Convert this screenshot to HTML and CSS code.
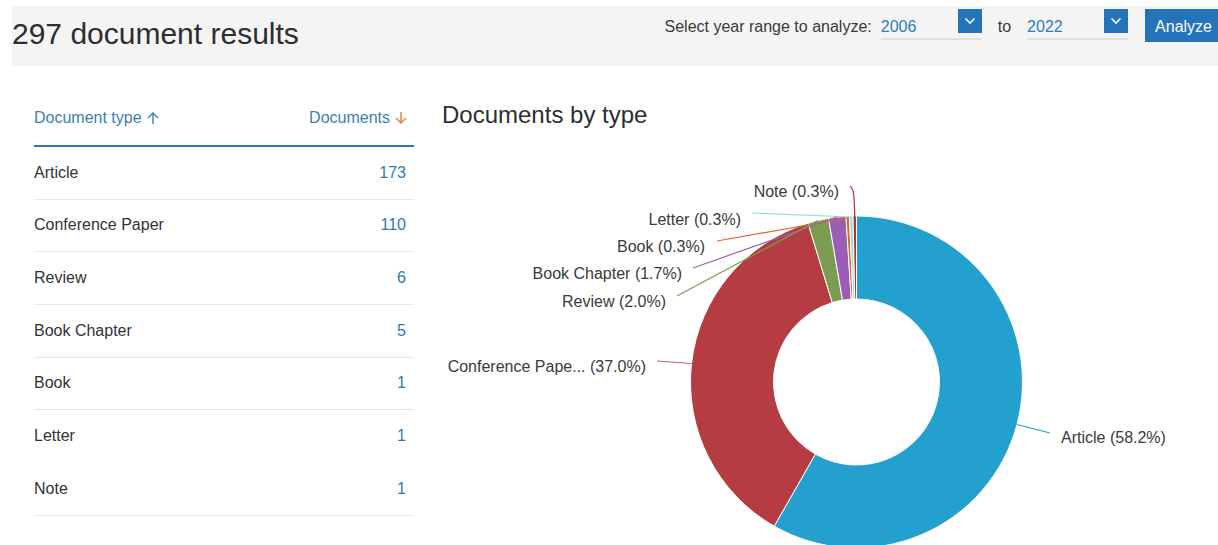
FILE: index.html
```html
<!DOCTYPE html>
<html lang="en">
<head>
<meta charset="utf-8">
<title>Document results</title>
<link rel="stylesheet" href="styles.css">
</head>
<body>
<header class="results-bar">
  <h1 class="results-title">297 document results</h1>
  <div class="range-controls">
    <span class="range-label">Select year range to analyze:</span>
    <div class="year-select">
      <span class="year-value">2006</span>
      <span class="select-toggle"><svg width="24" height="24" viewBox="0 0 24 24"><polyline points="7.5,9.5 12,14 16.5,9.5" fill="none" stroke="#fff" stroke-width="1.6"/></svg></span>
    </div>
    <span class="range-sep">to</span>
    <div class="year-select">
      <span class="year-value">2022</span>
      <span class="select-toggle"><svg width="24" height="24" viewBox="0 0 24 24"><polyline points="7.5,9.5 12,14 16.5,9.5" fill="none" stroke="#fff" stroke-width="1.6"/></svg></span>
    </div>
    <button class="analyze-btn" type="button">Analyze</button>
  </div>
</header>

<main class="analysis">
  <section class="type-table">
    <div class="table-head">
      <span class="head-cell">Document type
        <svg class="sort-icon" width="14" height="14" viewBox="0 0 14 14"><path d="M7 13V2M2 7l5-5 5 5" fill="none" stroke="#3a80b3" stroke-width="1.4"/></svg>
      </span>
      <span class="head-cell head-count">Documents
        <svg class="sort-icon" width="14" height="14" viewBox="0 0 14 14"><path d="M7 1v11M2 7l5 5 5-5" fill="none" stroke="#e8793a" stroke-width="1.4"/></svg>
      </span>
    </div>
    <div class="table-row"><span>Article</span><span class="count">173</span></div>
    <div class="table-row"><span>Conference Paper</span><span class="count">110</span></div>
    <div class="table-row"><span>Review</span><span class="count">6</span></div>
    <div class="table-row"><span>Book Chapter</span><span class="count">5</span></div>
    <div class="table-row"><span>Book</span><span class="count">1</span></div>
    <div class="table-row row-plain"><span>Letter</span><span class="count">1</span></div>
    <div class="table-row"><span>Note</span><span class="count">1</span></div>
  </section>

  <section class="type-chart">
    <h2 class="chart-title">Documents by type</h2>
    <svg class="donut" width="776" height="420" viewBox="0 0 776 420">
      <g stroke="#fff" stroke-width="1">
        <path fill="#24a0cf" d="M414.5,76 A166,166 0 1 1 332.25,386.19 L373.37,314.09 A83,83 0 1 0 414.5,159 Z"/>
        <path fill="#b53c42" d="M332.25,386.19 A166,166 0 0 1 366.04,83.22 L390.27,162.61 A83,83 0 0 0 373.37,314.09 Z"/>
        <path fill="#7b9d52" d="M366.04,83.22 A166,166 0 0 1 386.53,78.37 L400.51,160.19 A83,83 0 0 0 390.27,162.61 Z"/>
        <path fill="#9a5eb6" d="M386.53,78.37 A166,166 0 0 1 403.96,76.33 L409.23,159.17 A83,83 0 0 0 400.51,160.19 Z"/>
        <path fill="#e2662b" d="M403.96,76.33 A166,166 0 0 1 407.49,76.15 L411,159.07 A83,83 0 0 0 409.23,159.17 Z"/>
        <path fill="#8fe2d2" d="M407.49,76.15 A166,166 0 0 1 411,76.04 L412.75,159.02 A83,83 0 0 0 411,159.07 Z"/>
        <path fill="#b1323d" d="M411,76.04 A166,166 0 0 1 414.5,76 L414.5,159 A83,83 0 0 0 412.75,159.02 Z"/>
      </g>
      <g fill="none" stroke-width="1.2">
        <path stroke="#b1323d" d="M408,46 C412,48 412.5,58 412.8,80"/>
        <path stroke="#8fe2d2" d="M310,73 L409,77"/>
        <path stroke="#e2662b" d="M275,101 L405.5,78"/>
        <path stroke="#9a5eb6" d="M251,128 L395,77"/>
        <path stroke="#7b9d52" d="M235,156 L376,80.5"/>
        <path stroke="#c4646c" d="M215,221 L249.5,223.5"/>
        <path stroke="#24a0cf" d="M575,284.5 L608,293"/>
      </g>
      <g class="slice-labels">
        <text x="397" y="57" text-anchor="end">Note (0.3%)</text>
        <text x="299" y="85" text-anchor="end">Letter (0.3%)</text>
        <text x="263" y="112" text-anchor="end">Book (0.3%)</text>
        <text x="240" y="139" text-anchor="end">Book Chapter (1.7%)</text>
        <text x="224" y="167" text-anchor="end">Review (2.0%)</text>
        <text x="204" y="232" text-anchor="end">Conference Pape... (37.0%)</text>
        <text x="619" y="303">Article (58.2%)</text>
      </g>
    </svg>
  </section>
</main>
</body>
</html>
```

FILE: styles.css
```css
html {
  overflow: hidden;
}

body {
  margin: 0;
  font-family: "Liberation Sans", Arial, sans-serif;
  color: #333;
  background: #fff;
}

/* Top bar with result count and year range */
.results-bar {
  display: flex;
  justify-content: space-between;
  align-items: flex-start;
  height: 60px;
  margin: 6px -4px 0 12px;
  background: #f4f4f4;
}

.results-title {
  margin: 0;
  padding-top: 11px;
  font-size: 30px;
  line-height: 34px;
  font-weight: normal;
  color: #2e2e2e;
}

.range-controls {
  display: flex;
  align-items: flex-start;
  margin-top: 3px;
  font-size: 16px;
}

.range-label,
.range-sep {
  margin-top: 8px;
  line-height: 20px;
  color: #3a3a3a;
}

.range-sep {
  margin: 8px 16px 0;
}

.year-select {
  display: flex;
  align-items: flex-start;
  width: 101px;
  height: 29px;
  margin-left: 9px;
  border-bottom: 2px solid #e0e0e0;
}

.range-sep + .year-select {
  margin-left: 0;
}

.year-value {
  margin-top: 8px;
  line-height: 20px;
  color: #2f7dbf;
}

.select-toggle {
  display: block;
  width: 24px;
  height: 24px;
  margin-left: auto;
  background: #2574b9;
}

.select-toggle svg {
  display: block;
}

.analyze-btn {
  height: 33px;
  margin-left: 17px;
  padding: 2px 10px 0;
  border: 0;
  background: #2574b9;
  color: #fff;
  font-family: inherit;
  font-size: 16px;
  line-height: 31px;
}

/* Body: table and chart side by side */
.analysis {
  display: flex;
  gap: 28px;
  padding-left: 34px;
}

.type-table {
  width: 380px;
  padding-top: 26px;
  font-size: 16px;
}

.table-head {
  display: flex;
  justify-content: space-between;
  padding: 16px 6px 17px 0;
  border-bottom: 2px solid #2b7aab;
  line-height: 20px;
  color: #3a80b3;
}

.head-cell {
  display: flex;
  align-items: center;
  gap: 4px;
}

.sort-icon {
  display: block;
}

.table-row {
  display: flex;
  justify-content: space-between;
  align-items: center;
  box-sizing: border-box;
  height: 52.67px;
  padding-right: 8px;
  border-bottom: 1px solid #e6e6e6;
  line-height: 20px;
  color: #333;
}

.table-row.row-plain {
  border-bottom-color: transparent;
}

.count {
  color: #2f7ab0;
}

.type-chart {
  flex: 1;
}

.chart-title {
  margin: 35px 0 11px;
  font-size: 24px;
  line-height: 28px;
  font-weight: normal;
  color: #2e2e2e;
}

.donut {
  display: block;
}

.slice-labels text {
  font-family: "Liberation Sans", Arial, sans-serif;
  font-size: 16px;
  fill: #3a3a3a;
}
```
